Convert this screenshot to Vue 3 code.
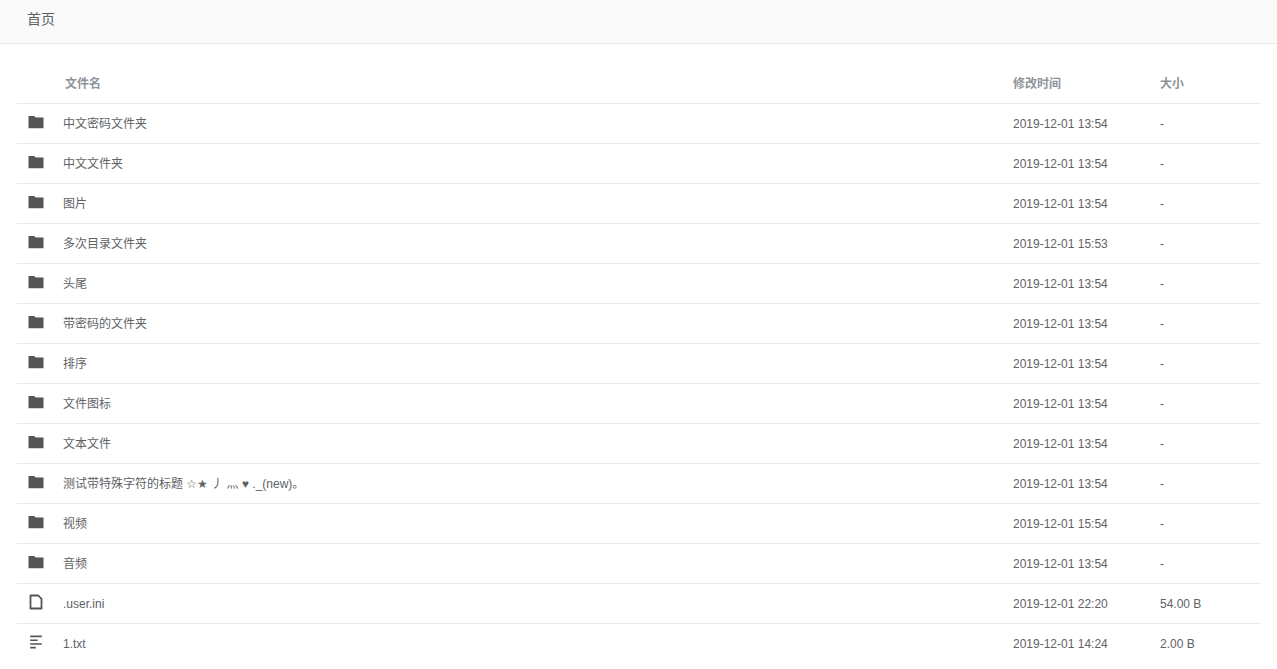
<script setup>
const at = '2019-12-01 13:54'
const files = [
  { name: '中文密码文件夹', time: at, size: '-', type: 'folder' },
  { name: '中文文件夹', time: at, size: '-', type: 'folder' },
  { name: '图片', time: at, size: '-', type: 'folder' },
  { name: '多次目录文件夹', time: '2019-12-01 15:53', size: '-', type: 'folder' },
  { name: '头尾', time: at, size: '-', type: 'folder' },
  { name: '带密码的文件夹', time: at, size: '-', type: 'folder' },
  { name: '排序', time: at, size: '-', type: 'folder' },
  { name: '文件图标', time: at, size: '-', type: 'folder' },
  { name: '文本文件', time: at, size: '-', type: 'folder' },
  { name: '测试带特殊字符的标题 ☆★ 丿 灬 ♥ ._(new)。', time: at, size: '-', type: 'folder' },
  { name: '视频', time: '2019-12-01 15:54', size: '-', type: 'folder' },
  { name: '音频', time: at, size: '-', type: 'folder' },
  { name: '.user.ini', time: '2019-12-01 22:20', size: '54.00 B', type: 'file' },
  { name: '1.txt', time: '2019-12-01 14:24', size: '2.00 B', type: 'text' }
]
</script>

<template>
  <div class="page">
    <header class="bar">
      <nav><a href="#">首页</a></nav>
    </header>
    <main class="content">
      <table class="files">
        <thead>
          <tr>
            <th class="icon-col"></th>
            <th class="name-head">文件名</th>
            <th class="time-col">修改时间</th>
            <th class="size-col">大小</th>
          </tr>
        </thead>
        <tbody>
          <tr v-for="file in files" :key="file.name">
            <td class="icon-col">
              <svg v-if="file.type === 'folder'" class="icon" viewBox="0 0 18 18" aria-hidden="true">
                <path fill="currentColor" d="M2 3h5.2l1.4 1.5h7.3q.6 0 .6.6v9.6q0 .6-.6.6H2q-.5 0-.5-.6V3.5q0-.5.5-.5z" />
              </svg>
              <svg v-else-if="file.type === 'file'" class="icon" viewBox="0 0 18 18" aria-hidden="true">
                <path fill="none" stroke="currentColor" stroke-width="1.8" stroke-linejoin="round" d="M3.5 2.5h7.8l3.2 3.4v9.6h-11z" />
              </svg>
              <svg v-else class="icon" viewBox="0 0 18 18" aria-hidden="true">
                <path fill="none" stroke="currentColor" stroke-width="1.6" d="M3.2 3.4h11.6M3.2 7.2h7.4M3.2 11h11.6M3.2 14.6h5.6" />
              </svg>
            </td>
            <td class="name-col"><a href="#">{{ file.name }}</a></td>
            <td class="time-col">{{ file.time }}</td>
            <td class="size-col">{{ file.size }}</td>
          </tr>
        </tbody>
      </table>
    </main>
  </div>
</template>

<style>
body {
  margin: 0;
  background: #fff;
}
</style>

<style scoped>
.page {
  font-family: "Liberation Sans", "DejaVu Sans", "Noto Sans CJK SC", sans-serif;
  font-size: 12px;
  color: #606266;
}
a {
  color: inherit;
  text-decoration: none;
}
.bar {
  padding: 7px 27px 12px;
  background: #fafafa;
  border-bottom: 1px solid #ebebeb;
  font-size: 14px;
  line-height: 24px;
}
.content {
  padding: 20px 16px 0 17px;
}
.files {
  width: 100%;
  table-layout: fixed;
  border-collapse: separate;
  border-spacing: 0;
}
th,
td {
  box-sizing: border-box;
  height: 40px;
  padding: 0;
  border-bottom: 1px solid #ebebeb;
  line-height: 20px;
  text-align: left;
  white-space: nowrap;
}
tbody tr:last-child td {
  border-bottom-color: transparent;
}
th {
  color: #909399;
  font-weight: 700;
}
.icon-col {
  width: 46px;
  padding-left: 10px;
}
.name-head {
  padding-left: 2px;
}
.time-col {
  width: 147px;
}
.size-col {
  width: 101px;
}
.icon {
  display: block;
  width: 18px;
  height: 18px;
  margin-bottom: 4px;
  color: #555;
}
</style>
